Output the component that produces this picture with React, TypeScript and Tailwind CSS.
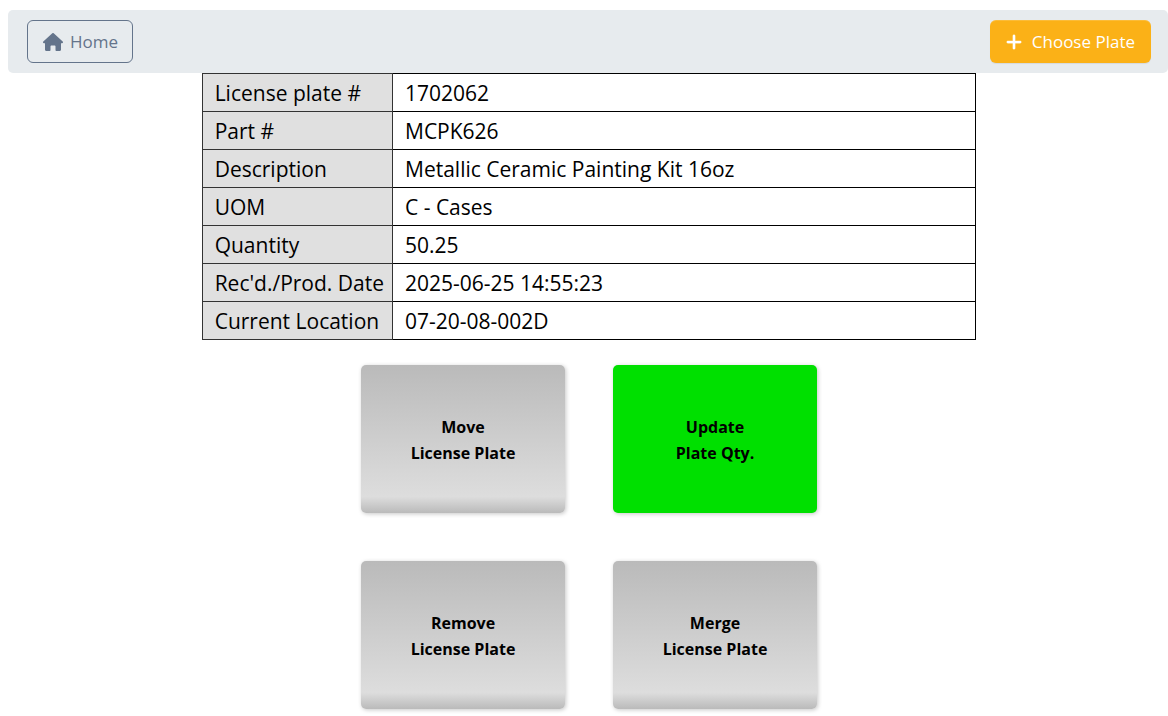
import { FaPlus } from "react-icons/fa6";
import clsx from "clsx";

const details = [
  { label: "License plate #", value: "1702062" },
  { label: "Part #", value: "MCPK626" },
  { label: "Description", value: "Metallic Ceramic Painting Kit 16oz" },
  { label: "UOM", value: "C - Cases" },
  { label: "Quantity", value: "50.25" },
  { label: "Rec'd./Prod. Date", value: "2025-06-25 14:55:23" },
  { label: "Current Location", value: "07-20-08-002D" },
];

const actions = [
  { first: "Move", second: "License Plate", active: false },
  { first: "Update", second: "Plate Qty.", active: true },
  { first: "Remove", second: "License Plate", active: false },
  { first: "Merge", second: "License Plate", active: false },
];

function HouseIcon() {
  return (
    <svg viewBox="0 0 20 18" className="h-[18px] w-5" fill="currentColor" aria-hidden="true">
      <path d="M9.3.3a1 1 0 0 1 1.4 0l9 8.2c.7.7.3 1.7-.7 1.7h-1v6.6c0 .7-.5 1.2-1.2 1.2h-3.3c-.6 0-1-.4-1-1v-3.5c0-.6-.4-1-1-1h-3c-.6 0-1 .4-1 1V17c0 .6-.4 1-1 1H3.2c-.7 0-1.2-.5-1.2-1.2v-6.6H1c-1 0-1.4-1-.7-1.7z" />
    </svg>
  );
}

export default function App() {
  return (
    <div className="bg-white pt-[10px] pl-2 font-['Segoe_UI','Open_Sans','Noto_Sans',sans-serif] text-black">
      <header className="flex items-center justify-between rounded-[5px] bg-[#e7ebee] py-[10px] pr-[17px] pl-[19px]">
        <a
          href="#home"
          className="flex h-[43px] items-center gap-[7px] rounded-md border border-[#64748b] pr-[14px] pl-[15px] text-[17px] text-[#64748b]"
        >
          <HouseIcon />
          Home
        </a>
        <button
          type="button"
          className="flex h-[43px] items-center gap-[9px] rounded-md bg-[#fbb117] pr-4 pl-[15px] text-[17px] text-white shadow-[inset_0_1px_0_rgba(255,255,255,0.15),0_1px_1px_rgba(0,0,0,0.075)]"
        >
          <FaPlus className="size-[18px] stroke-white" strokeWidth={10} />
          Choose Plate
        </button>
      </header>

      <main className="flex flex-col items-center pl-0.5">
        <table className="w-[66.9%] border-collapse border border-[#333] text-[21px] leading-[35px]">
          <tbody>
            {details.map(({ label, value }) => (
              <tr key={label}>
                <th
                  scope="row"
                  className="w-[190px] border border-[#333] bg-[#e0e0e0] pt-0.5 pr-2 pb-0 pl-3 text-left font-normal whitespace-nowrap"
                >
                  {label}
                </th>
                <td className="border border-black px-3 pt-0.5 pb-0">{value}</td>
              </tr>
            ))}
          </tbody>
        </table>

        <div className="grid grid-cols-2 gap-12 pt-[25px] pb-2">
          {actions.map(({ first, second, active }) => (
            <button
              key={first}
              type="button"
              className={clsx(
                "h-[148px] w-[204px] rounded-[5px] pt-0.5 text-base leading-[26px] font-bold shadow-[1px_1px_4px_rgba(0,0,0,0.22)]",
                active
                  ? "bg-[#00e000]"
                  : "bg-[linear-gradient(to_bottom,#bababa,#dddddd_89%,#bababa)]",
              )}
            >
              {first}
              <br />
              {second}
            </button>
          ))}
        </div>
      </main>
    </div>
  );
}
